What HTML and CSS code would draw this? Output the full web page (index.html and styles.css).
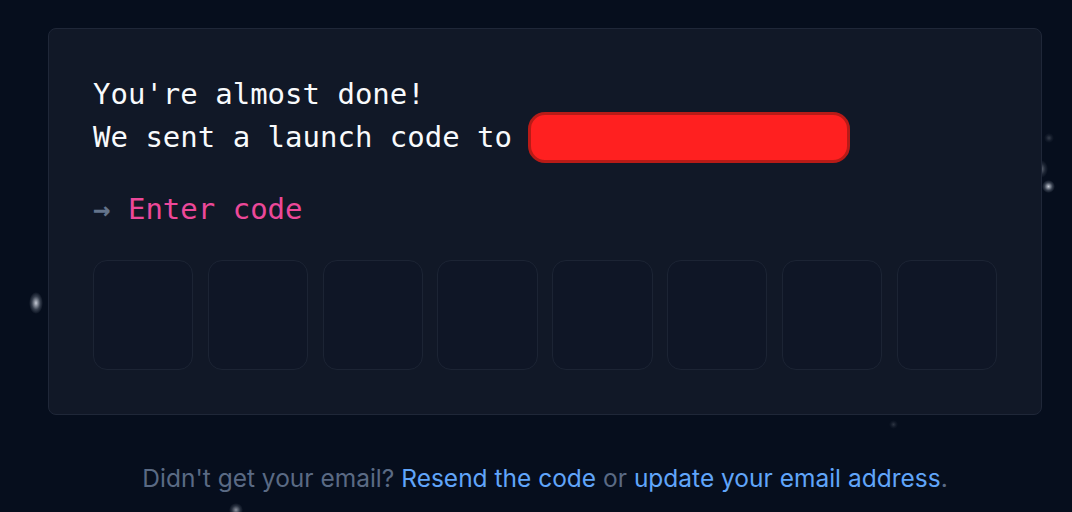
FILE: index.html
```html
<!DOCTYPE html>
<html>
<head>
<meta charset="utf-8">
<link rel="stylesheet" href="styles.css">
</head>
<body>
<div class="stars">
  <span class="star s1"></span>
  <span class="star s2"></span>
  <span class="star s3"></span>
  <span class="star s4"></span>
  <span class="star s5"></span>
  <span class="star s6"></span>
</div>
<main class="wrap">
  <section class="card">
    <h1 class="title">You're almost done!<br>We sent a launch code to <span class="redact"></span></h1>
    <p class="prompt"><span class="arrow">→</span> <span class="enter">Enter code</span></p>
    <div class="code-row">
      <div class="code-box"></div>
      <div class="code-box"></div>
      <div class="code-box"></div>
      <div class="code-box"></div>
      <div class="code-box"></div>
      <div class="code-box"></div>
      <div class="code-box"></div>
      <div class="code-box"></div>
    </div>
  </section>
  <p class="help">Didn't get your email? <a href="#">Resend the code</a> or <a href="#">update your email address</a>.</p>
</main>
</body>
</html>
```
FILE: styles.css
```css
html, body {
  margin: 0;
  height: 100%;
}
body {
  background: #060e1d;
  overflow: hidden;
  position: relative;
}
.stars {
  position: absolute;
  inset: 0;
  z-index: 0;
}
.star {
  position: absolute;
  border-radius: 50%;
  background: radial-gradient(closest-side, rgba(230,235,245,0.85), rgba(200,210,225,0.25) 60%, rgba(200,210,225,0) 100%);
}
.s1 { left: 29px; top: 292px; width: 14px; height: 22px; }
.s2 { left: 1042px; top: 180px; width: 13px; height: 13px; }
.s3 { left: 1044px; top: 133px; width: 10px; height: 10px; opacity: 0.25; }
.s4 { left: 229px; top: 503px; width: 14px; height: 14px; opacity: 0.7; }
.s5 { left: 889px; top: 420px; width: 9px; height: 9px; opacity: 0.2; }
.s6 { left: 1034px; top: 160px; width: 14px; height: 18px; opacity: 0.5; }
.wrap {
  position: relative;
  z-index: 1;
  width: 994px;
  margin-left: 48px;
  padding-top: 28px;
}
.card {
  background: #111827;
  border: 1px solid #1f2738;
  border-radius: 8px;
  padding: 44px;
}
.title {
  margin: 0;
  font-family: "DejaVu Sans Mono", monospace;
  font-weight: normal;
  font-size: 29px;
  line-height: 43px;
  color: #f8fafc;
}
.redact {
  display: inline-block;
  width: 316px;
  height: 45px;
  border: 3.5px solid #b81b17;
  background: #ff2020;
  border-radius: 17px;
  vertical-align: middle;
  margin: -14px 0 -10px -2px;
}
.prompt {
  margin: 29px 0 0;
  font-family: "DejaVu Sans Mono", monospace;
  font-size: 29px;
  line-height: 43px;
}
.arrow {
  color: #64748b;
  font-weight: bold;
}
.enter {
  color: #ec4899;
}
.code-row {
  margin-top: 29px;
  display: grid;
  grid-template-columns: repeat(8, 1fr);
  gap: 14.5px;
}
.code-box {
  height: 110px;
  border: 1px solid #1c2434;
  border-radius: 14px;
  background: #0f1626;
  box-sizing: border-box;
}
.help {
  margin: 47px 0 0;
  text-align: center;
  font-family: Inter, "Noto Sans", sans-serif;
  font-size: 24.5px;
  line-height: 32px;
  color: #5a6a84;
}
.help a {
  color: #60a5fa;
  text-decoration: none;
}
```
